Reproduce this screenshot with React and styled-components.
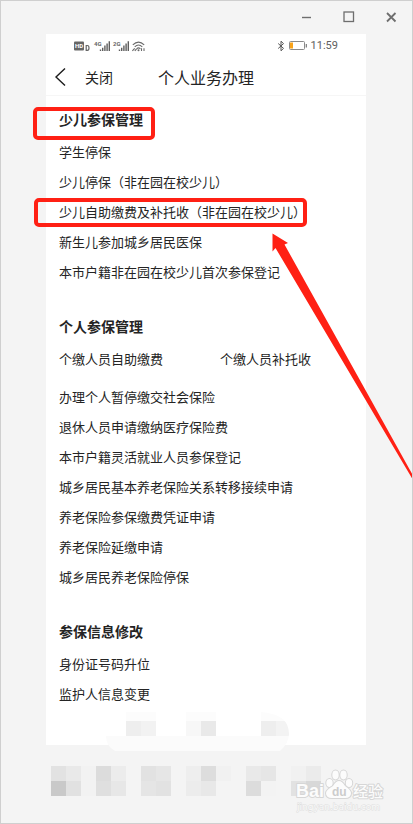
import React from 'react'
import styled, { createGlobalStyle } from 'styled-components'

const GlobalStyle = createGlobalStyle`
  * {
    box-sizing: border-box;
  }
  body {
    margin: 0;
    background: #f4f4f4;
    font-family: "Noto Sans CJK SC", "Noto Sans", sans-serif;
    color: #242424;
  }
  svg {
    display: block;
  }
`;

const Window = styled.div`
  position: relative;
  display: flex;
  flex-direction: column;
  min-height: 100vh;
  overflow: hidden;
  border: 1px solid #cfcfcf;
  background: #f4f4f4;
`;

const TitleBar = styled.div`
  display: flex;
  justify-content: flex-end;
  height: 33px;
`;

const WindowButton = styled.button`
  display: flex;
  align-items: center;
  justify-content: center;
  width: 42px;
  height: 32px;
  padding: 0;
  border: none;
  background: none;
`;

const Phone = styled.main`
  position: relative;
  flex: 1;
  margin: 0 46px 78px 45px;
  background: #fff;
`;

const StatusBar = styled.div`
  display: flex;
  align-items: center;
  justify-content: space-between;
  height: 24px;
  padding: 0 28px;
`;

const StatusRight = styled.div`
  display: flex;
  align-items: center;
  gap: 3px;
  font-family: Roboto, sans-serif;
  font-size: 11px;
  line-height: 12px;
  color: #606060;
`;

const NavBar = styled.header`
  display: grid;
  grid-template-columns: 1fr auto 1fr;
  align-items: center;
  height: 38px;
  border-bottom: 1px solid #f6f6f6;
`;

const NavLeft = styled.div`
  display: flex;
  align-items: center;
  gap: 16px;
  padding-left: 8px;
`;

const NavButton = styled.button`
  display: flex;
  padding: 0;
  border: none;
  background: none;
  font-family: inherit;
  font-size: 14px;
  line-height: 20px;
  color: #242424;
`;

const Title = styled.h1`
  margin: 0;
  font-size: 16px;
  font-weight: 400;
  line-height: 24px;
`;

const Content = styled.div`
  display: flex;
  flex-direction: column;
  gap: 29px;
  padding: 13px 13px 36px;
`;

const Section = styled.section`
  display: flex;
  flex-direction: column;
  gap: 8px;
`;

const SectionTitle = styled.h2`
  align-self: flex-start;
  position: relative;
  margin: 0;
  font-size: 14px;
  font-weight: 700;
  line-height: 20px;
`;

const List = styled.ul`
  display: grid;
  grid-template-columns: ${props => props.$columns === 2 ? "1fr 1fr" : "1fr"};
  column-gap: 28px;
  margin: 0;
  padding: 0;
  list-style: none;
`;

const Item = styled.li`
  font-size: 13px;
  line-height: 30px;
  white-space: nowrap;
`;

const ItemLink = styled.a`
  position: relative;
  display: inline-block;
  color: inherit;
  text-decoration: none;
`;

const Highlight = styled.span`
  position: absolute;
  inset: ${props => props.$inset};
  border: 4px solid #ff2014;
  border-radius: 5px;
`;

const Arrow = styled.svg`
  position: absolute;
  top: 231px;
  right: -1px;
`;

const Mosaic = styled.svg`
  position: absolute;
  left: 0;
  bottom: -53px;
`;

const Watermark = styled.div`
  position: absolute;
  right: 26px;
  bottom: 9px;
`;

const sections = [
    {
        title: "少儿参保管理",
        marked: true,
        lists: [
            {
                items: [
                    { text: "学生停保" },
                    { text: "少儿停保（非在园在校少儿）" },
                    { text: "少儿自助缴费及补托收（非在园在校少儿）", marked: true },
                    { text: "新生儿参加城乡居民医保" },
                    { text: "本市户籍非在园在校少儿首次参保登记" },
                ]
            },
        ],
    },
    {
        title: "个人参保管理",
        lists: [
            {
                columns: 2,
                items: [
                    { text: "个缴人员自助缴费" },
                    { text: "个缴人员补托收" },
                ]
            },
            {
                items: [
                    { text: "办理个人暂停缴交社会保险" },
                    { text: "退休人员申请缴纳医疗保险费" },
                    { text: "本市户籍灵活就业人员参保登记" },
                    { text: "城乡居民基本养老保险关系转移接续申请" },
                    { text: "养老保险参保缴费凭证申请" },
                    { text: "养老保险延缴申请" },
                    { text: "城乡居民养老保险停保" },
                ]
            },
        ],
    },
    {
        title: "参保信息修改",
        lists: [
            {
                items: [
                    { text: "身份证号码升位" },
                    { text: "监护人信息变更" },
                ]
            },
        ],
    },
]

// [x, y, colour], every block is 15px
const tabBlocks = [
    [80, 11, "#eeeeee"], [95, 11, "#f2f2f2"],
    [140, 11, "#f7f7f7"], [155, 11, "#e9e9e9"],
    [215, 11, "#eeeeee"], [230, 11, "#f3f3f3"],
]

const footBlocks = [
    [5, 56, "#e2e2e2"], [20, 56, "#e9e9e9"], [35, 56, "#f2f2f2"], [50, 56, "#dcdcdc"], [65, 56, "#ececec"],
    [95, 56, "#e2e2e2"], [110, 56, "#e6e6e6"], [140, 56, "#eeeeee"], [155, 56, "#dddddd"], [170, 56, "#f1f1f1"],
    [200, 56, "#e9e9e9"], [215, 56, "#e6e6e6"], [245, 56, "#f1f1f1"], [260, 56, "#ebebeb"],
    [5, 71, "#c9c9c9"], [20, 71, "#e1e1e1"], [35, 71, "#f2f2f2"], [50, 71, "#dfdfdf"], [65, 71, "#e7e7e7"],
    [95, 71, "#e5e5e5"], [110, 71, "#e2e2e2"], [140, 71, "#ececec"], [155, 71, "#e8e8e8"],
    [200, 71, "#dcdcdc"], [215, 71, "#f3f3f3"], [245, 71, "#e2e2e2"], [260, 71, "#d8d8d8"],
]

const Signal = ({ x, label }) => (
    <g>
        <text x={x} y="6" fontSize="6" fontWeight="700" fontFamily="Roboto, sans-serif" fill="#666">{label}</text>
        <path
            d={`M${x + 6.5} 11V9.5M${x + 8.7} 11V7.8M${x + 10.9} 11V5.6M${x + 13.1} 11V3.4M${x + 15.3} 11V1.2`}
            stroke="#5e5e5e"
            strokeWidth="1.4"
        />
    </g>
)

const StatusIcons = () => (
    <svg width="72" height="12" viewBox="0 0 72 12">
        <rect x="0" y="1.5" width="10" height="9" rx="1" fill="#666" />
        <text x="1" y="8" fontSize="6" fontWeight="700" fontFamily="Roboto, sans-serif" fill="#fff">HD</text>
        <path d="M12.2 5.5h1.2q1.6 0 1.6 2.4t-1.6 2.4h-1.2z" fill="none" stroke="#666" strokeWidth="1.2" />
        <Signal x={20} label="4G" />
        <Signal x={39} label="2G" />
        <g fill="none" stroke="#6a6a6a" strokeWidth="1.1">
            <path d="M58.8 4.8Q64.5 -0.6 70.2 4.8M60.7 6.8Q64.5 3.2 68.3 6.8M62.6 8.8Q64.5 7 66.4 8.8" />
            <path d="M58.4 10.8L60.7 8.3M60.8 10.8L62.5 9M67.5 8.3V11M70 8.3V11" />
        </g>
        <circle cx="64.5" cy="10.3" r="1" fill="#6a6a6a" />
    </svg>
)

const StatusRightIcons = () => (
    <svg width="31" height="12" viewBox="0 0 31 12">
        <path d="M1.2 3.5L6.5 8.4L4 10.8V1.2L6.5 3.6L1.2 8.5" fill="none" stroke="#555" />
        <rect x="12.5" y="1.5" width="15" height="8" rx="1" fill="#fff" stroke="#8a8a8a" />
        <rect x="13" y="2.5" width="3" height="6" fill="#f9a31a" />
        <path d="M29.3 4V7.5" stroke="#777" strokeWidth="1.2" />
    </svg>
)

const App = () => {
    return (
        <>
            <GlobalStyle />
            <Window>
                <TitleBar>
                    <WindowButton aria-label="最小化">
                        <svg width="12" height="12"><path d="M1 6.5H10" stroke="#6e6e6e" strokeWidth="1.4" /></svg>
                    </WindowButton>
                    <WindowButton aria-label="最大化">
                        <svg width="12" height="12"><rect x="1" y="1" width="9.5" height="9.5" fill="none" stroke="#6e6e6e" strokeWidth="1.3" /></svg>
                    </WindowButton>
                    <WindowButton aria-label="关闭窗口">
                        <svg width="12" height="12"><path d="M2 2L10.5 10.5M10.5 2L2 10.5" stroke="#6e6e6e" strokeWidth="1.8" /></svg>
                    </WindowButton>
                </TitleBar>
                <Phone>
                    <StatusBar>
                        <StatusIcons />
                        <StatusRight>
                            <StatusRightIcons />
                            11:59
                        </StatusRight>
                    </StatusBar>
                    <NavBar>
                        <NavLeft>
                            <NavButton aria-label="返回">
                                <svg width="15" height="20"><path d="M11 1.5L2 10L11 18.5" fill="none" stroke="#1c1c1c" strokeWidth="1.4" /></svg>
                            </NavButton>
                            <NavButton>关闭</NavButton>
                        </NavLeft>
                        <Title>个人业务办理</Title>
                    </NavBar>
                    <Content>
                        {sections.map(section => (
                            <Section key={section.title}>
                                <SectionTitle>
                                    {section.title}
                                    {section.marked && <Highlight $inset="-2px -12px -11px -26px" />}
                                </SectionTitle>
                                {section.lists.map((list, i) => (
                                    <List key={i} $columns={list.columns}>
                                        {list.items.map(item => (
                                            <Item key={item.text}>
                                                <ItemLink href="#">
                                                    {item.text}
                                                    {item.marked && <Highlight $inset="1px -1px 0 -25px" />}
                                                </ItemLink>
                                            </Item>
                                        ))}
                                    </List>
                                ))}
                            </Section>
                        ))}
                    </Content>
                    <Mosaic width="290" height="88" viewBox="0 0 290 88">
                        <defs>
                            <clipPath id="brush">
                                <path d="M60 26V2H215Q243 4 243 24Q243 33 234 41H69Q60 36 60 26Z" />
                            </clipPath>
                        </defs>
                        <g clipPath="url(#brush)">
                            <rect x="60" y="26" width="183" height="15" fill="#fbfbfb" />
                            <path d="M80 2h30v9H80zM140 2h30v9h-30zM215 2h30v9h-30z" fill="#fcfcfc" />
                            {tabBlocks.map(([x, y, color]) => (
                                <rect key={x} x={x} y={y} width="15" height="15" fill={color} />
                            ))}
                        </g>
                        {footBlocks.map(([x, y, color]) => (
                            <rect key={`${x}-${y}`} x={x} y={y} width="15" height="15" fill={color} />
                        ))}
                    </Mosaic>
                </Phone>
                <Arrow width="141" height="250" viewBox="0 0 141 250">
                    <path d="M0.5 1.5L16 11L12.5 12.5L141 243.5V248L3.5 16L0.5 19.5Z" fill="#ff2014" />
                </Arrow>
                <Watermark>
                    <svg width="92" height="46" viewBox="0 0 92 46">
                        <g fill="#fcfcfc" stroke="#d6d6d6" strokeWidth="2" paintOrder="stroke" strokeLinejoin="round">
                            <text x="2" y="29" fontSize="18" fontWeight="700" fontFamily="Liberation Sans, sans-serif">Bai</text>
                            <ellipse cx="35.5" cy="15" rx="3.2" ry="4" />
                            <ellipse cx="41.5" cy="7" rx="3.2" ry="4.4" />
                            <ellipse cx="49.5" cy="7" rx="3.2" ry="4.4" />
                            <ellipse cx="55" cy="15" rx="3.2" ry="4" />
                            <path d="M45 13Q48 13 51 18Q57 22 57 25Q57 30 51 30H38Q32 30 32 25Q32 22 39 18Q42 13 45 13Z" />
                            <text x="59" y="29" fontSize="15" fontWeight="500" fontFamily="Noto Sans CJK SC, sans-serif">经验</text>
                        </g>
                        <text x="38" y="28" fontSize="12" fontWeight="700" fontFamily="Liberation Sans, sans-serif" fill="#cccccc">du</text>
                        <text x="3" y="42" fontSize="9" fontFamily="DejaVu Sans, sans-serif" fill="#fafafa" stroke="#dedede" strokeWidth="1" paintOrder="stroke">jingyan.baidu.com</text>
                    </svg>
                </Watermark>
            </Window>
        </>
    )
}

export default App
